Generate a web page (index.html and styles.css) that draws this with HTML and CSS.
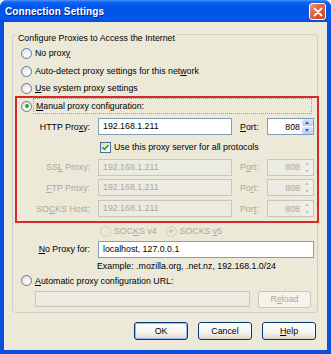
FILE: index.html
```html
<!DOCTYPE html>
<html lang="en">
<head>
    <meta charset="UTF-8">
    <title>Connection Settings</title>
    <link rel="stylesheet" href="styles.css">
</head>
<body>

    <div class="window">
        <!-- Title Bar -->
        <div class="titlebar">
            <span class="title">Connection Settings</span>
            <span class="close">
                <svg width="10" height="10" viewBox="0 0 10 10"><path d="M1.5 1.5 L8.5 8.5 M8.5 1.5 L1.5 8.5" stroke="#fff" stroke-width="1.8" stroke-linecap="round"/></svg>
            </span>
        </div>

        <div class="dialog">
            <div class="group">
                <div class="group-title"><span>Configure Proxies to Access the Internet</span></div>

                <div class="opt r-first"><span class="radio"></span><span>No prox<u>y</u></span></div>
                <div class="opt r-first"><span class="radio"></span><span>Auto-detect proxy settings for this net<u>w</u>ork</span></div>
                <div class="opt r-last"><span class="radio"></span><span><u>U</u>se system proxy settings</span></div>

                <!-- Manual proxy block -->
                <div class="manual">
                    <div class="opt manual-opt"><span class="radio on"></span><span class="focus"><u>M</u>anual proxy configuration:</span></div>

                    <div class="field http">
                        <span class="lbl">HTTP Pro<u>x</u>y:</span>
                        <div class="input host">192.168.1.211</div>
                        <span class="plbl"><u>P</u>ort:</span>
                        <div class="spin">
                            <span class="val">808</span>
                            <span class="arrows"><span class="up"></span><span class="down"></span></span>
                        </div>
                    </div>

                    <div class="check-row">
                        <span class="check">
                            <svg width="9" height="9" viewBox="0 0 9 9"><path d="M1.5 4.2 L3.5 6.3 L7.5 2" fill="none" stroke="#21a121" stroke-width="1.6"/></svg>
                        </span>
                        <span>Use this proxy server for all protocols</span>
                    </div>

                    <div class="field off">
                        <span class="lbl">SS<u>L</u> Proxy:</span>
                        <div class="input host">192.168.1.211</div>
                        <span class="plbl">P<u>o</u>rt:</span>
                        <div class="spin">
                            <span class="val">808</span>
                            <span class="arrows"><span class="up"></span><span class="down"></span></span>
                        </div>
                    </div>

                    <div class="field off tall">
                        <span class="lbl"><u>F</u>TP Proxy:</span>
                        <div class="input host">192.168.1.211</div>
                        <span class="plbl">Po<u>r</u>t:</span>
                        <div class="spin">
                            <span class="val">808</span>
                            <span class="arrows"><span class="up"></span><span class="down"></span></span>
                        </div>
                    </div>

                    <div class="field off tall">
                        <span class="lbl">SO<u>C</u>KS Host:</span>
                        <div class="input host">192.168.1.211</div>
                        <span class="plbl">Por<u>t</u>:</span>
                        <div class="spin">
                            <span class="val">808</span>
                            <span class="arrows"><span class="up"></span><span class="down"></span></span>
                        </div>
                    </div>
                </div>

                <div class="socks-row">
                    <span class="radio off"></span><span class="dim">SOC<u>K</u>S v4</span>
                    <span class="radio off on v5"></span><span class="dim">SOCKS <u>v</u>5</span>
                </div>

                <div class="field noproxy">
                    <span class="lbl"><u>N</u>o Proxy for:</span>
                    <div class="input wide">localhost, 127.0.0.1</div>
                </div>

                <div class="example">Example: .mozilla.org, .net.nz, 192.168.1.0/24</div>

                <div class="opt auto-opt"><span class="radio"></span><span><u>A</u>utomatic proxy configuration URL:</span></div>

                <div class="url-row">
                    <div class="input url"></div>
                    <span class="btn disabled">R<u>e</u>load</span>
                </div>
            </div>

            <div class="buttons">
                <span class="btn default">OK</span>
                <span class="btn">Cancel</span>
                <span class="btn"><u>H</u>elp</span>
            </div>
        </div>
    </div>

</body>
</html>
```

FILE: styles.css
```css
html, body {
    margin: 0;
    background: #ffffff;
}

body {
    font-family: 'Liberation Sans', Arial, sans-serif;
    font-size: 8.8px;
    color: #000;
}

u {
    text-decoration: underline;
    text-underline-offset: 1px;
}

/* Window frame */
.window {
    width: 331px;
    height: 354px;
    display: flex;
    flex-direction: column;
    background: #0b4fdc;
    border-radius: 7px 7px 0 0;
    overflow: hidden;
}

.titlebar {
    height: 22px;
    flex: none;
    display: flex;
    align-items: center;
    justify-content: space-between;
    background: linear-gradient(#4c95fb 0, #1467f0 2px, #0058ee 5px, #0054e6 12px, #0058ee 18px, #0a4ad6 22px);
}

.title {
    padding-left: 5px;
    font-weight: bold;
    font-size: 10px;
    color: #fff;
    text-shadow: 1px 1px 0 #0a1e8c;
    letter-spacing: 0.1px;
}

.close {
    width: 15px;
    height: 15px;
    margin: 1px 5px 0 0;
    border: 1px solid #fff;
    border-radius: 3px;
    background: linear-gradient(135deg, #ec9a7e 0%, #e0603c 45%, #c8441c 100%);
    display: flex;
    align-items: center;
    justify-content: center;
}

/* Dialog body */
.dialog {
    flex: 1;
    margin: 0 4px 4px 4px;
    background: #ece9d8;
    display: flex;
    flex-direction: column;
}

.group {
    margin: 12px 9px 0 8px;
    padding: 0 0 2px 0;
    border: 1px solid #d0d0bf;
    border-radius: 4px;
}

.group-title {
    height: 10px;
    margin: -2px 0 1px 0;
    line-height: 10px;
    padding-left: 3px;
}

.group-title span {
    padding: 0 2px;
    background: #ece9d8;
}

/* Radio options */
.opt {
    display: flex;
    align-items: center;
    gap: 3px;
    padding-left: 8px;
}

.r-first { height: 18px; }
.r-last { height: 16px; }

.radio {
    width: 11px;
    height: 11px;
    flex: none;
    box-sizing: border-box;
    border: 1px solid #5a7ca5;
    border-radius: 50%;
    background: radial-gradient(circle at 65% 70%, #ffffff 0, #f4f3ee 40%, #d8d6ca 100%);
    position: relative;
}

.radio.on::after {
    content: '';
    position: absolute;
    left: 2.5px;
    top: 2.5px;
    width: 4px;
    height: 4px;
    border-radius: 50%;
    background: #2ea32e;
}

.radio.off {
    border-color: #d0cebf;
    background: #ece9d8;
}

.radio.off.on::after {
    background: #c9c6b6;
}

/* Manual block with red highlight */
.manual {
    margin: 0 -2px 0 2px;
    border: 2px solid #d32a2a;
    padding-bottom: 2px;
}

.manual-opt {
    height: 16px;
    padding-left: 4px;
    gap: 1px;
}

.focus {
    flex: 1;
    margin-right: 5px;
    height: 14px;
    line-height: 14px;
    padding-left: 2px;
    border: 1px dotted #9a9a8c;
}

.field {
    display: flex;
    align-items: center;
    height: 20px;
}

.field.http {
    height: 21px;
    margin-top: 2px;
}

.field.tall { height: 21px; }

.lbl {
    width: 73px;
    padding-right: 2px;
    margin-right: 6px;
    text-align: right;
    flex: none;
    box-sizing: content-box;
}

.plbl {
    width: 27px;
    margin-left: 8px;
    flex: none;
}

.input {
    box-sizing: border-box;
    height: 17px;
    line-height: 15px;
    padding-left: 4px;
    border: 1px solid #7f9db9;
    background: #fff;
    white-space: nowrap;
    overflow: hidden;
}

.host { width: 134px; }

.spin {
    box-sizing: border-box;
    width: 47px;
    height: 17px;
    border: 1px solid #7f9db9;
    background: #fff;
    display: flex;
    align-items: center;
    justify-content: flex-end;
}

.spin .val {
    padding-right: 2px;
}

.arrows {
    width: 11px;
    height: 15px;
    display: flex;
    flex-direction: column;
    gap: 1px;
}

.arrows span {
    flex: 1;
    border-radius: 2px;
    background: linear-gradient(#dbe5fb, #b9cbf3);
    position: relative;
}

.arrows span::after {
    content: '';
    position: absolute;
    left: 3px;
    width: 0;
    height: 0;
    border-left: 2.5px solid transparent;
    border-right: 2.5px solid transparent;
}

.arrows .up::after {
    top: 2px;
    border-bottom: 3px solid #4d6185;
}

.arrows .down::after {
    top: 2px;
    border-top: 3px solid #4d6185;
}

/* Disabled fields */
.off .lbl,
.off .plbl,
.dim {
    color: #aca899;
}

.off .input,
.off .spin {
    background: #ecebe2;
    border-color: #c9c7ba;
    color: #aca899;
}

.off .arrows span {
    background: #f1f0e8;
}

.off .arrows .up::after { border-bottom-color: #c9c7ba; }
.off .arrows .down::after { border-top-color: #c9c7ba; }

/* Checkbox */
.check-row {
    display: flex;
    align-items: center;
    gap: 3px;
    height: 20px;
    padding-left: 83px;
}

.check {
    width: 11px;
    height: 11px;
    box-sizing: border-box;
    border: 1px solid #4c6f99;
    background: linear-gradient(135deg, #dcdad0, #ffffff);
    display: flex;
    align-items: center;
    justify-content: center;
}

/* SOCKS version */
.socks-row {
    display: flex;
    align-items: center;
    gap: 3px;
    height: 16px;
    padding-left: 87px;
}

.socks-row .v5 {
    margin-left: 6px;
}

.noproxy .lbl {
    width: 77px;
}

.wide { width: 216px; }

.example {
    height: 14px;
    line-height: 14px;
    padding-left: 84px;
}

.auto-opt {
    height: 15px;
}

.url-row {
    display: flex;
    align-items: center;
    gap: 8px;
    height: 22px;
    padding-left: 22px;
}

.url {
    width: 215px;
    height: 16px;
    background: #ecebe2;
    border-color: #c9c7ba;
}

/* Buttons */
.btn {
    box-sizing: border-box;
    width: 54px;
    height: 18px;
    display: flex;
    align-items: center;
    justify-content: center;
    border: 1px solid #003c74;
    border-radius: 3px;
    background: linear-gradient(#ffffff 0, #f4f3ee 60%, #e3e0d5 90%, #d6d0c5 100%);
}

.btn.default {
    box-shadow: inset 0 0 0 1px #9cb6f2;
}

.btn.disabled {
    width: 53px;
    height: 17px;
    border-color: #c9c7ba;
    background: #f5f4ea;
    color: #aca899;
}

.buttons {
    display: flex;
    justify-content: flex-end;
    gap: 10px;
    margin: 9px 11px 0 0;
}
```
